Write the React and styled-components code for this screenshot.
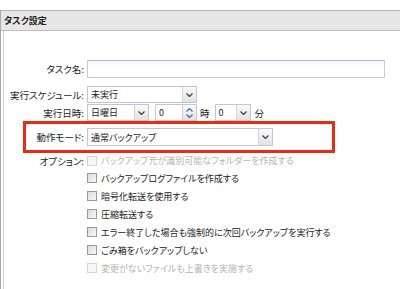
import React from 'react';
import styled, { createGlobalStyle } from 'styled-components';

const Global = createGlobalStyle`
  html, body {
    margin: 0;
    padding: 0;
    background: #fff;
  }
  body {
    font-family: "Noto Sans CJK JP", "Noto Sans", sans-serif;
    font-size: 9.5px;
    color: #1a1a1a;
    font-feature-settings: "palt";
  }
`

const Root = styled.div`
  width: 400px;
  height: 289px;
  padding-top: 10px;
  box-sizing: border-box;
  overflow: hidden;
`

const Frame = styled.div`
  height: 100%;
  border-left: 1px solid #a9a9a9;
  display: flex;
  flex-direction: column;
`

const Header = styled.div`
  height: 19px;
  background: #e7e7e7;
  border-top: 1px solid #b4b4b4;
  border-bottom: 1px solid #c4bcbc;
  display: flex;
  align-items: center;
  padding-left: 3px;
  font-weight: bold;
  font-size: 9px;
  color: #222;
`

const Panel = styled.div`
  flex: 1;
  margin-left: 2px;
  border-left: 1px solid #d4d4d4;
  padding-top: 29px;
  display: flex;
  flex-direction: column;
`

const Row = styled.div`
  display: grid;
  grid-template-columns: ${({labelWidth}) => labelWidth || 80}px 1fr;
  column-gap: 3px;
  align-items: center;
  height: ${({h}) => h || 17}px;
  margin-top: ${({mt}) => mt || 0}px;
`

const Label = styled.div`
  text-align: right;
  white-space: nowrap;
`

const Controls = styled.div`
  display: flex;
  align-items: center;
`

const TextInput = styled.div`
  width: 298px;
  height: 18px;
  box-sizing: border-box;
  border: 1px solid #c9c9dc;
  border-top-color: #b8b8cc;
  background: linear-gradient(#f4f8fb, #fff 40%);
`

const SelectBox = styled.div`
  width: ${({w}) => w}px;
  height: ${({h}) => h || 17}px;
  box-sizing: border-box;
  border: 1px solid #c4c4d8;
  display: flex;
  align-items: stretch;
  background: #fff;
  margin-right: ${({mr}) => mr || 0}px;
`

const SelectText = styled.div`
  flex: 1;
  padding-left: 3px;
  display: flex;
  align-items: center;
  white-space: nowrap;
  overflow: hidden;
  font-size: 9px;
`

const ArrowButton = styled.div`
  width: 13px;
  border-left: 1px solid #d2d2e0;
  background: linear-gradient(#fafafa, #e2e2e6);
  display: flex;
  align-items: center;
  justify-content: center;
`

const SpinButton = styled.div`
  width: 13px;
  border-left: 1px solid #d2d2e0;
  background: linear-gradient(#fafafa, #e2e2e6);
  display: flex;
  flex-direction: column;
  align-items: center;
  justify-content: center;
  gap: 2px;
`

const Unit = styled.span`
  margin-right: ${({mr}) => mr || 0}px;
`

const Highlight = styled.div`
  margin-left: 19px;
  width: 312px;
  height: 32px;
  box-sizing: border-box;
  border: 3px solid #ec2a12;
  display: flex;
  align-items: center;
`

const Check = styled.span`
  width: 10px;
  height: 10px;
  box-sizing: border-box;
  border: 1px solid ${({disabled}) => disabled ? '#d6d6d6' : '#9a9a9a'};
  background: ${({disabled}) => disabled ? '#f6f6f6' : 'linear-gradient(135deg, #dcdcdc, #f7f7f7)'};
  margin-right: 4px;
  flex: none;
`

const OptionText = styled.span`
  white-space: nowrap;
  font-size: 9px;
  color: ${({disabled}) => disabled ? '#b4b4b4' : '#1a1a1a'};
`

const Chevron = ({up, color = '#444'}) => (
  <svg width="7" height="4" viewBox="0 0 7 4">
    <polyline
      points={up ? '0.5,3.5 3.5,0.5 6.5,3.5' : '0.5,0.5 3.5,3.5 6.5,0.5'}
      fill="none"
      stroke={color}
      strokeWidth="1.3"
    />
  </svg>
)

const Select = ({value, w, h, mr}) => (
  <SelectBox w={w} h={h} mr={mr}>
    <SelectText>{value}</SelectText>
    <ArrowButton><Chevron/></ArrowButton>
  </SelectBox>
)

const options = [
  {text: 'バックアップ元が識別可能なフォルダーを作成する', disabled: true},
  {text: 'バックアップログファイルを作成する'},
  {text: '暗号化転送を使用する'},
  {text: '圧縮転送する'},
  {text: 'エラー終了した場合も強制的に次回バックアップを実行する'},
  {text: 'ごみ箱をバックアップしない'},
  {text: '変更がないファイルも上書きを実施する', disabled: true},
]

function App() {
  return (
    <Root>
      <Global/>
      <Frame>
        <Header>タスク設定</Header>
        <Panel>
          <Row h={18}>
            <Label>タスク名:</Label>
            <Controls><TextInput/></Controls>
          </Row>
          <Row mt={8}>
            <Label>実行スケジュール:</Label>
            <Controls><Select value="未実行" w={110}/></Controls>
          </Row>
          <Row mt={1}>
            <Label>実行日時:</Label>
            <Controls>
              <Select value="日曜日" w={62} mr={6}/>
              <SelectBox w={42} mr={3}>
                <SelectText>0</SelectText>
                <SpinButton>
                  <Chevron up color="#3d6fb4"/>
                  <Chevron color="#3d6fb4"/>
                </SpinButton>
              </SelectBox>
              <Unit mr={5}>時</Unit>
              <Select value="0" w={36} mr={4}/>
              <Unit>分</Unit>
            </Controls>
          </Row>
          <Highlight>
            <Row labelWidth={58} h={18}>
              <Label>動作モード:</Label>
              <Controls><Select value="通常バックアップ" w={186} h={18}/></Controls>
            </Row>
          </Highlight>
          {options.map((opt, i) => (
            <Row key={i} h={i === 0 ? 17 : 18} mt={i === 0 ? -1 : 0}>
              <Label>{i === 0 ? 'オプション:' : ''}</Label>
              <Controls>
                <Check disabled={opt.disabled}/>
                <OptionText disabled={opt.disabled}>{opt.text}</OptionText>
              </Controls>
            </Row>
          ))}
        </Panel>
      </Frame>
    </Root>
  );
}

export default App;
